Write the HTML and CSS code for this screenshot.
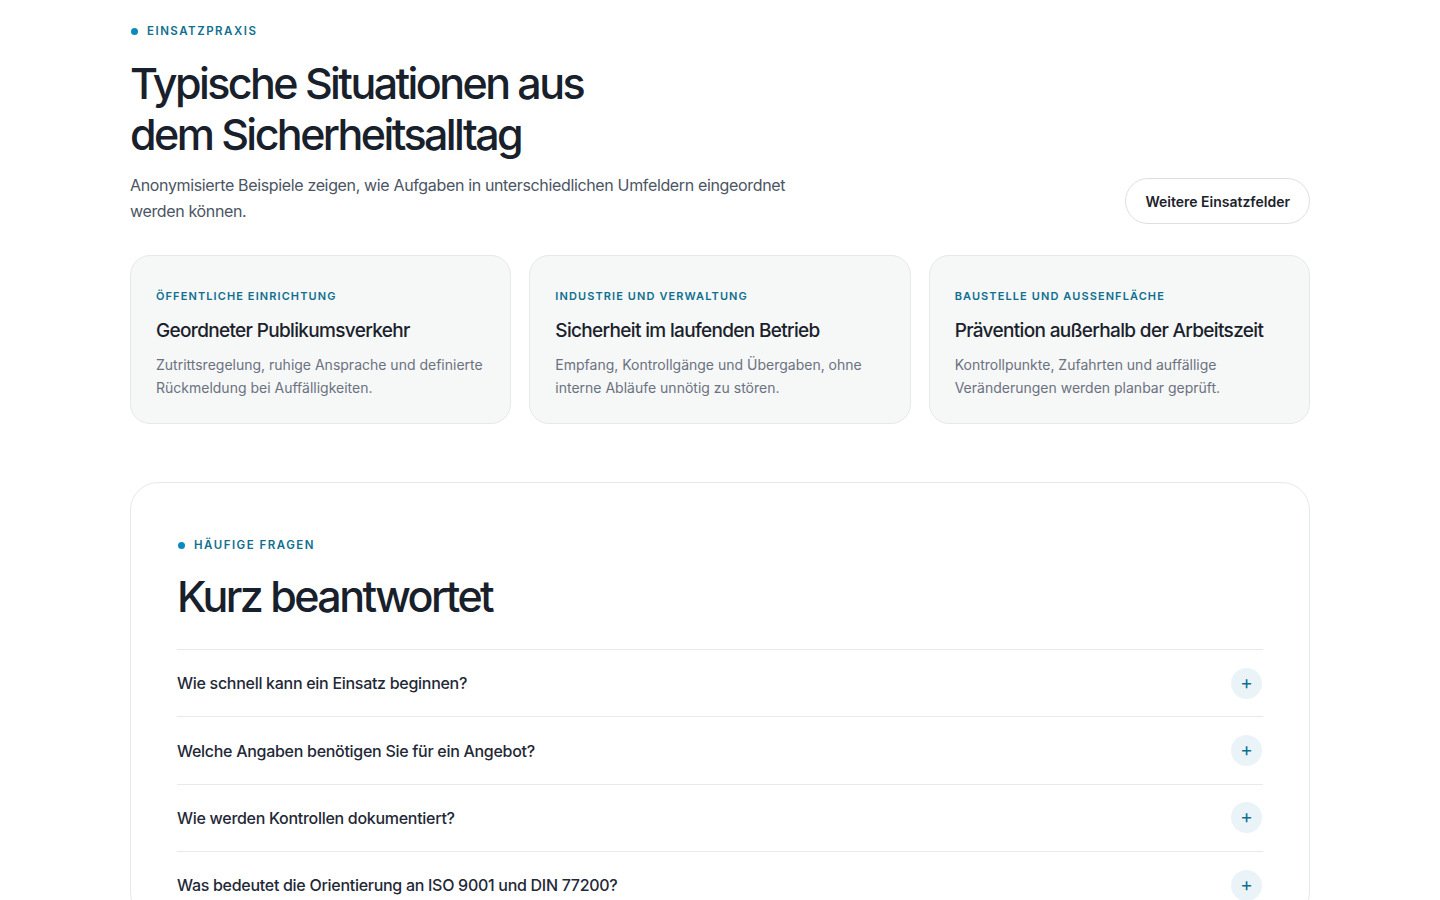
FILE: index.html
```html
<!DOCTYPE html>
<html lang="de">
<head>
  <meta charset="UTF-8" />
  <meta name="viewport" content="width=device-width, initial-scale=1.0"/>
  <title>Einsatzpraxis</title>
<link rel="stylesheet" href="styles.css">
</head>
<body>
  <main class="page">
    <section class="praxis">
      <div class="praxis-head">
        <div>
          <span class="eyebrow">Einsatzpraxis</span>
          <h1>Typische Situationen aus<br>dem Sicherheitsalltag</h1>
          <p class="lead">Anonymisierte Beispiele zeigen, wie Aufgaben in unterschiedlichen Umfeldern eingeordnet werden können.</p>
        </div>
        <a href="#" class="btn-outline">Weitere Einsatzfelder</a>
      </div>

      <div class="cases">
        <article class="case">
          <span class="case-label">Öffentliche Einrichtung</span>
          <h3>Geordneter Publikumsverkehr</h3>
          <p>Zutrittsregelung, ruhige Ansprache und definierte Rückmeldung bei Auffälligkeiten.</p>
        </article>
        <article class="case">
          <span class="case-label">Industrie und Verwaltung</span>
          <h3>Sicherheit im laufenden Betrieb</h3>
          <p>Empfang, Kontrollgänge und Übergaben, ohne interne Abläufe unnötig zu stören.</p>
        </article>
        <article class="case">
          <span class="case-label">Baustelle und Außenfläche</span>
          <h3>Prävention außerhalb der Arbeitszeit</h3>
          <p>Kontrollpunkte, Zufahrten und auffällige Veränderungen werden planbar geprüft.</p>
        </article>
      </div>
    </section>

    <section class="faq">
      <span class="eyebrow">Häufige Fragen</span>
      <h2>Kurz beantwortet</h2>
      <div class="faq-list">
        <div class="faq-item">
          <span>Wie schnell kann ein Einsatz beginnen?</span>
          <button class="faq-toggle" aria-label="Öffnen">+</button>
        </div>
        <div class="faq-item">
          <span>Welche Angaben benötigen Sie für ein Angebot?</span>
          <button class="faq-toggle" aria-label="Öffnen">+</button>
        </div>
        <div class="faq-item">
          <span>Wie werden Kontrollen dokumentiert?</span>
          <button class="faq-toggle" aria-label="Öffnen">+</button>
        </div>
        <div class="faq-item">
          <span>Was bedeutet die Orientierung an ISO 9001 und DIN 77200?</span>
          <button class="faq-toggle" aria-label="Öffnen">+</button>
        </div>
      </div>
    </section>
  </main>
</body>
</html>
```

FILE: styles.css
```css
* {
  box-sizing: border-box;
}

body {
  font-family: Inter, 'Noto Sans', sans-serif;
  margin: 0;
  background: #ffffff;
  color: #18212b;
}

.page {
  max-width: 1180px;
  margin: 0 auto;
  padding-top: 24px;
}

.eyebrow {
  display: flex;
  align-items: center;
  gap: 9px;
  font-size: 11.5px;
  font-weight: 600;
  letter-spacing: 0.13em;
  text-transform: uppercase;
  color: #0f6f8f;
}

.eyebrow::before {
  content: "";
  width: 7px;
  height: 7px;
  margin-left: 1px;
  border-radius: 50%;
  background: #0a8bbd;
}

h1 {
  margin: 20px 0 0;
  font-size: 43px;
  font-weight: 500;
  line-height: 51px;
  letter-spacing: -0.06em;
  color: #18212b;
}

.lead {
  margin: 12px 0 0;
  max-width: 690px;
  font-size: 16px;
  line-height: 26px;
  letter-spacing: -0.022em;
  color: #4b5563;
}

.praxis-head {
  display: flex;
  justify-content: space-between;
  align-items: flex-end;
}

.btn-outline {
  display: inline-flex;
  align-items: center;
  height: 46px;
  padding: 0 19px;
  border: 1px solid #dcdfe3;
  border-radius: 999px;
  font-size: 14px;
  font-weight: 600;
  color: #1c232b;
  text-decoration: none;
  background: #fff;
}

.cases {
  display: grid;
  grid-template-columns: repeat(3, 1fr);
  gap: 18px;
  margin-top: 31px;
}

.case {
  background: #f6f7f7;
  border: 1px solid #e6e8e9;
  border-radius: 20px;
  padding: 33px 20px 24px 25px;
  min-height: 169px;
}

.case-label {
  display: block;
  font-size: 11px;
  font-weight: 600;
  letter-spacing: 0.1em;
  text-transform: uppercase;
  color: #0f6f8f;
}

.case h3 {
  margin: 16px 0 0;
  font-size: 19px;
  font-weight: 500;
  letter-spacing: -0.035em;
  color: #1a222b;
}

.case p {
  margin: 11px 0 0;
  font-size: 14px;
  line-height: 23px;
  color: #6b7280;
}

.faq {
  margin-top: 58px;
  border: 1px solid #e6e8ea;
  border-radius: 28px;
  padding: 55px 46px 0;
  background: #fff;
}

.faq h2 {
  margin: 16px 0 0;
  font-size: 43px;
  font-weight: 500;
  line-height: 56px;
  letter-spacing: -0.06em;
  color: #18212b;
}

.faq-list {
  margin-top: 25px;
}

.faq-item {
  display: flex;
  justify-content: space-between;
  align-items: center;
  height: 67.4px;
  border-top: 1px solid #e7e9eb;
  font-size: 16px;
  font-weight: 500;
  letter-spacing: -0.018em;
  color: #1f2937;
}

.faq-toggle {
  width: 31px;
  height: 31px;
  margin-right: 1px;
  border: none;
  border-radius: 50%;
  background: #eaf4f8;
  color: #0f6f8f;
  font-family: inherit;
  font-size: 19px;
  font-weight: 400;
  line-height: 1;
  padding: 0 0 2px;
  cursor: pointer;
}
```
